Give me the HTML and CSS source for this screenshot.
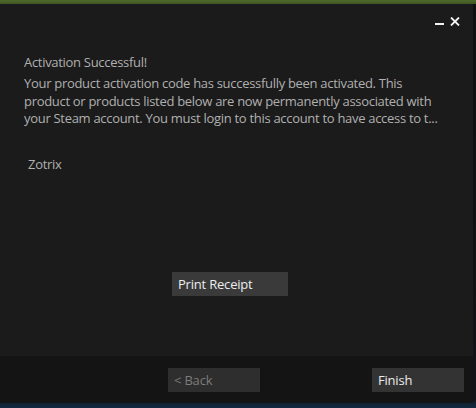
FILE: index.html
```html
<!DOCTYPE html>
<html>
<head>
<meta charset="utf-8">
<link rel="stylesheet" href="styles.css">
</head>
<body>
<div class="desktop">
  <div class="window">
    <div class="titlebar">
      <span class="minimize"></span>
      <svg class="close" width="10" height="9" viewBox="0 0 10 9"><path d="M1 0.5 L9 8.5 M9 0.5 L1 8.5" stroke="#f2f2f2" stroke-width="1.8"/></svg>
    </div>
    <div class="content">
      <div class="heading">Activation Successful!</div>
      <p class="message">Your product activation code has successfully been activated. This<br>product or products listed below are now permanently associated with<br>your Steam account. You must login to this account to have access to t...</p>
      <div class="product">Zotrix</div>
      <button class="btn btn-receipt">Print Receipt</button>
    </div>
    <div class="footer">
      <button class="btn btn-disabled">&lt; Back</button>
      <button class="btn btn-finish">Finish</button>
    </div>
  </div>
</div>
</body>
</html>
```
FILE: styles.css
```css
* { box-sizing: border-box; }
html, body { margin: 0; padding: 0; }
body {
  width: 476px;
  height: 408px;
  overflow: hidden;
  font-family: "Open Sans", "Noto Sans", sans-serif;
}
.desktop {
  width: 476px;
  height: 408px;
  padding-top: 4px;
  background:
    linear-gradient(to bottom, #4e6a2a 0, #3f5522 4px, transparent 4px),
    linear-gradient(to bottom, #0d0f10 0, #101418 400px, #0f2232 403px, #122a40 408px);
}
.window {
  width: 473px;
  height: 399px;
  background: #1b1b1b;
  display: flex;
  flex-direction: column;
}
.titlebar {
  height: 49px;
  flex: none;
  display: flex;
  align-items: flex-start;
  justify-content: flex-end;
  padding-right: 13px;
  padding-top: 13px;
}
.minimize {
  display: block;
  width: 9px;
  height: 2px;
  background: #f2f2f2;
  margin-top: 6px;
  margin-right: 6px;
}
.close { display: block; }
.content {
  flex: 1;
  padding-left: 24px;
  color: #b0b0b0;
  font-size: 13px;
  letter-spacing: -0.3px;
}
.heading {
  line-height: 18px;
}
.message {
  margin: 4px 0 0 0;
  line-height: 17.5px;
  white-space: nowrap;
}
.product {
  margin-top: 28.5px;
  margin-left: 4px;
  line-height: 17.5px;
}
.btn {
  display: block;
  border: 0;
  height: 24px;
  padding: 0 0 0 6px;
  text-align: left;
  font-family: "Open Sans", "Noto Sans", sans-serif;
  font-size: 13px;
  letter-spacing: -0.2px;
  line-height: 24px;
  color: #ececec;
  background: #383838;
}
.btn-receipt {
  width: 116px;
  margin-left: 148px;
  margin-top: 98.5px;
  background: #3a3a3a;
}
.footer {
  height: 47px;
  flex: none;
  background: #141414;
  display: flex;
  justify-content: flex-end;
  align-items: flex-start;
  padding-top: 12px;
  padding-right: 9px;
  gap: 112px;
}
.btn-disabled {
  width: 92px;
  background: #2e2e2e;
  color: #7c7c7c;
}
.btn-finish {
  width: 92px;
  background: #333333;
  color: #ececec;
}
```
